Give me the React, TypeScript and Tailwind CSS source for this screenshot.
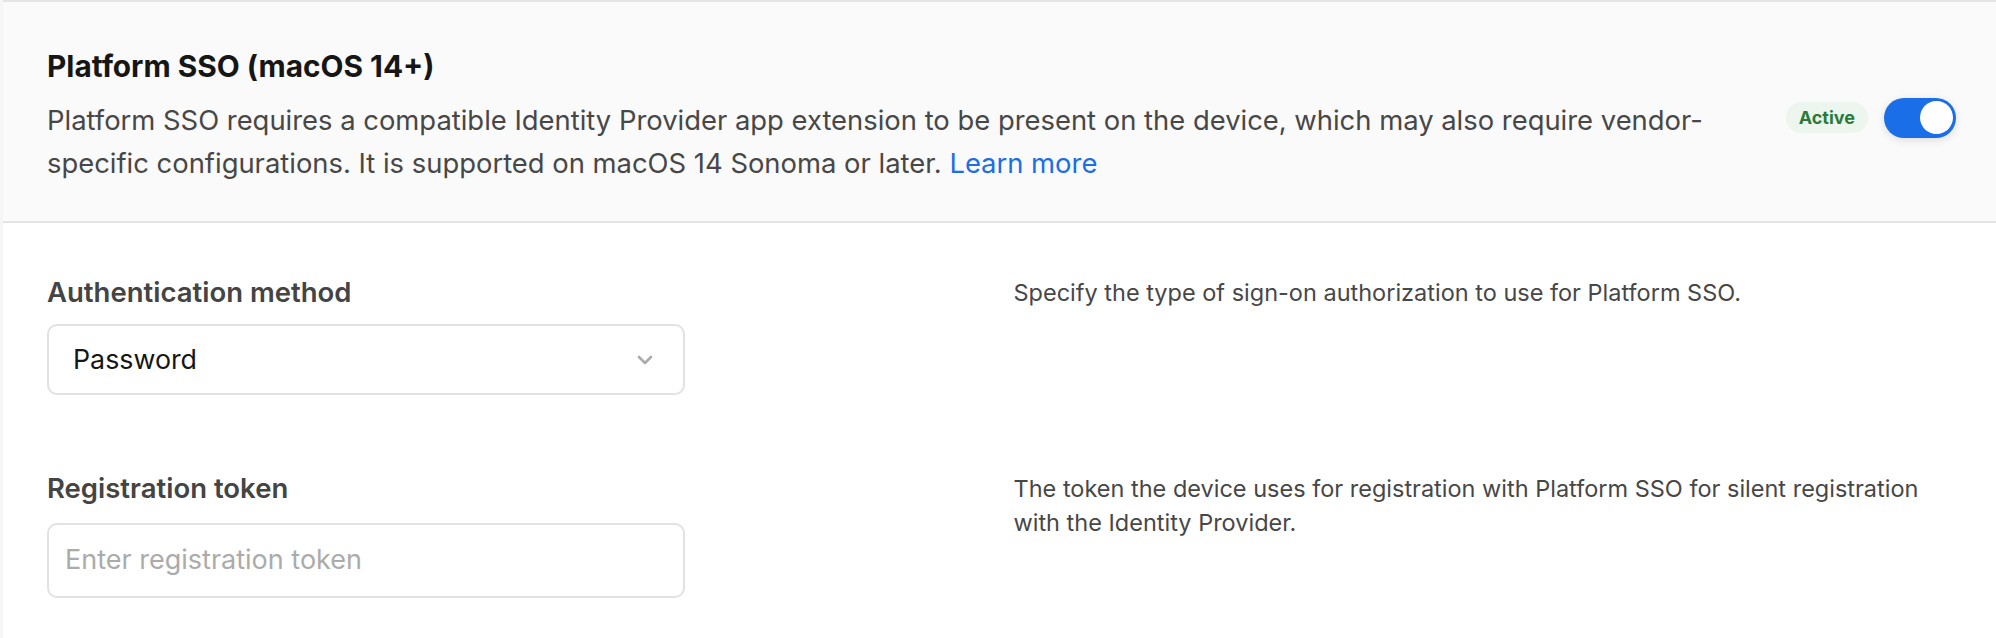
import React from "react";

export default function App() {
  return (
    <div
      className="w-[1996px] h-[638px] bg-white overflow-hidden border-l-[3px] border-[#f6f6f6]"
      style={{ fontFamily: "Inter, 'Noto Sans', sans-serif" }}
    >
      {/* Header */}
      <div className="border-t-2 border-b-2 border-[#e4e4e4] bg-[#fafafa] pl-[44px] pr-[40px] pt-[48px] pb-[36px] flex items-center">
        <div className="flex-1 pr-[20px]">
          <h2 className="text-[29.8px] leading-[32px] font-bold text-[#161616]">
            Platform SSO (macOS 14+)
          </h2>
          <p className="mt-[17px] text-[27.4px] leading-[43px] text-[#474747]">
            Platform SSO requires a compatible Identity Provider app extension to be present on the device, which may also require vendor-specific configurations. It is supported on macOS 14 Sonoma or later.{" "}
            <a className="text-[#1a6ee6]">Learn more</a>
          </p>
        </div>
        <div className="flex items-center gap-[16px]">
          <span className="h-[31px] px-[13px] rounded-full bg-[#ecf6ee] text-[#2a7a3a] text-[18px] font-bold flex items-center">
            Active
          </span>
          <div className="w-[72px] h-[40px] rounded-full bg-[#1a6ee8] flex items-center justify-end pr-[3px] shadow-[0_2px_8px_rgba(0,0,0,0.12)]">
            <div className="w-[33px] h-[33px] rounded-full bg-white" />
          </div>
        </div>
      </div>

      {/* Body */}
      <div className="pl-[44px] pr-[40px] pt-[53px] grid grid-cols-2 gap-x-[24px]">
        <div>
          <div className="text-[27.5px] leading-[32px] font-semibold text-[#444444]">
            Authentication method
          </div>
          <div className="mt-[16px] w-[638px] h-[71px] rounded-[10px] border-2 border-[#e2e2e2] bg-white flex items-center justify-between pl-[24px] pr-[30px]">
            <span className="text-[26.8px] text-[#161616]">Password</span>
            <svg width="16" height="10" viewBox="0 0 16 10" fill="none">
              <polyline points="2,2 8,8 14,2" stroke="#ababab" strokeWidth="2.6" strokeLinecap="round" strokeLinejoin="round" />
            </svg>
          </div>
        </div>
        <div>
          <p className="text-[23.5px] leading-[34px] text-[#474747] max-w-[930px]">
            Specify the type of sign-on authorization to use for Platform SSO.
          </p>
        </div>

        <div className="mt-[77px]">
          <div className="text-[27.5px] leading-[32px] font-semibold text-[#444444]">
            Registration token
          </div>
          <div className="mt-[19px] w-[638px] h-[75px] rounded-[10px] border-2 border-[#e2e2e2] bg-white flex items-center pl-[16px]">
            <span className="text-[27px] text-[#ababab]">Enter registration token</span>
          </div>
        </div>
        <div className="mt-[77px]">
          <p className="text-[23.5px] leading-[34px] text-[#474747] max-w-[930px]">
            The token the device uses for registration with Platform SSO for silent registration with the Identity Provider.
          </p>
        </div>
      </div>
    </div>
  );
}
